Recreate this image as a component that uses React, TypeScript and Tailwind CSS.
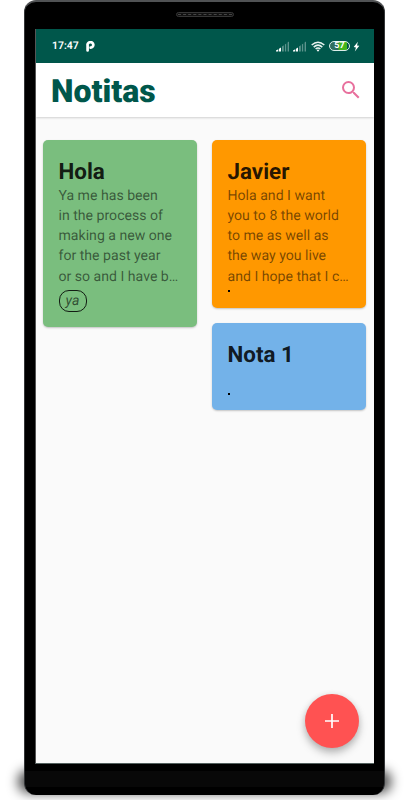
import React from "react";

function Signal() {
  return (
    <svg width="14" height="11" viewBox="0 0 14 11" className="block">
      <path d="M0 10.5V9.4L2.3 8.2V10.5Z M3 10.5V7.8L5 6.4V10.5Z" fill="#fff" />
      <path d="M6 10.5V5.5L7.8 4.2V10.5Z M8.9 10.5V3.4L10.2 2.4V10.5Z M11.6 10.5V1.4L13 .4V10.5Z" fill="#fff" opacity=".36" />
    </svg>
  );
}

function Wifi() {
  return (
    <svg width="14" height="11" viewBox="0 0 14 11" className="block" fill="none" stroke="#e8f3f0" strokeWidth="1.5">
      <path d="M.7 4Q7 -1.6 13.3 4" />
      <path d="M2.7 6.1Q7 2.2 11.3 6.1" />
      <path d="M4.6 8Q7 6 9.4 8" />
      <path d="M5.6 9.1Q7 8 8.4 9.1L7 10.7Z" fill="#fff" stroke="none" />
    </svg>
  );
}

function StatusBar() {
  return (
    <div className="flex h-[34px] items-center bg-[#00574b] pl-[16px] pr-[14px] text-white">
      <span className="w-[28px] whitespace-nowrap text-[10.5px] font-semibold leading-none">17:47</span>
      <svg width="9" height="11" viewBox="0 0 9 11" className="ml-[5.5px]">
        <path d="M1.6 9.4V4.6A2.9 2.8 0 1 1 4.6 6.7" fill="none" stroke="#fff" strokeWidth="2.7" strokeLinecap="round" />
      </svg>
      <div className="ml-auto flex items-center">
        <Signal />
        <div className="ml-[3px]"><Signal /></div>
        <div className="ml-[4px]"><Wifi /></div>
        <div className="ml-[4px] flex h-[10px] w-[21px] items-center justify-center rounded-full border border-[#dceee9] bg-[linear-gradient(90deg,#2f6f5f_0,#2f6f5f_40%,#43b51b_50%,#43b51b_88%,#00574b_88%)]">
          <span className="text-[9px] font-bold leading-none">57</span>
        </div>
        <svg width="7" height="11" viewBox="0 0 7 11" className="ml-[3px]">
          <path d="M4.9 .8L.7 6.1L3 6.4L1.8 10.4L6.3 4.8L4 4.5Z" fill="#fff" />
        </svg>
      </div>
    </div>
  );
}

function Header() {
  return (
    <header className="z-10 flex h-[54px] items-center justify-between bg-white pl-[15px] pr-[11px] shadow-[0_1px_2px_rgba(0,0,0,0.17)]">
      <h1 className="pt-[2px] text-[32px] font-black leading-none text-[#00574b]">Notitas</h1>
      <svg width="24" height="24" viewBox="0 0 24 24" fill="#e8709d">
        <path d="M15.5 14h-.79l-.28-.27A6.471 6.471 0 0 0 16 9.5 6.5 6.5 0 1 0 9.5 16c1.61 0 3.09-.59 4.23-1.57l.27.28v.79l5 4.99L20.49 19l-4.99-5zm-6 0C7.01 14 5 11.99 5 9.5S7.01 5 9.5 5 14 7.01 14 9.5 11.99 14 9.5 14z" />
      </svg>
    </header>
  );
}

interface NoteProps {
  title: string;
  lines?: string[];
  tag?: string;
  look: string;
}

function Note({ title, lines = [], tag, look }: NoteProps) {
  return (
    <article className={`rounded-[5px] px-[15.5px] pt-[19px] shadow-[0_1px_2px_rgba(0,0,0,0.22)] ${look}`}>
      <h2 className="h-[27.2px] whitespace-nowrap text-[22.4px] font-bold leading-[26px] text-black/87">{title}</h2>
      <div className="min-h-[20px] whitespace-nowrap text-[14.1px] leading-[20.2px] text-black/54">
        {lines.map((line) => <p key={line}>{line}</p>)}
      </div>
      {tag ? (
        <span className="mt-[3.5px] flex h-[22px] w-[28px] items-center justify-center rounded-[10px] border-[1.4px] border-black/85 text-[14.1px] italic leading-none text-black/60">{tag}</span>
      ) : (
        <div className="mt-[3.5px] size-[2px] bg-black" />
      )}
    </article>
  );
}

export default function App() {
  return (
    <div className="relative h-[800px] w-[409px] overflow-hidden bg-white pl-[24px] font-['Roboto','Liberation_Sans',sans-serif] [text-rendering:geometricPrecision]">
      <div className="absolute left-[18px] top-[770px] h-[23px] w-[373px] rounded-[10px] bg-black/70 blur-[6px]" />
      <div className="relative h-[795px] w-[361px] rounded-[12px] border border-[#343638] border-t-2 border-b-0 border-t-[#505254] bg-[linear-gradient(#000_0,#000_97%,#080808_97%,#080808_99%,#000_99%)] pl-[10px]">
        <div className="flex h-[27px] justify-center pr-[10px] pt-[10px]">
          <div className="flex h-[5px] w-[58px] items-center justify-center rounded-full border border-[#363636] bg-[#111]">
            <div className="w-[54px] border-t border-dashed border-[#454545]" />
          </div>
        </div>
        <main className="relative flex h-[735px] w-[339px] flex-col overflow-hidden border-l border-b border-x-[#555] border-b-[#53605e] bg-[#fafafa]">
          <StatusBar />
          <Header />
          <div className="flex gap-[15.5px] pl-[7px] pt-[22.5px]">
            <div className="w-[153.5px]">
              <Note
                title="Hola"
                lines={["Ya me has been", "in the process of", "making a new one", "for the past year", "or so and I have b…"]}
                tag="ya"
                look="h-[187px] bg-[#7abe7e]"
              />
            </div>
            <div className="flex w-[153.5px] flex-col gap-[15.5px]">
              <Note
                title="Javier"
                lines={["Hola and I want", "you to 8 the world", "to me as well as", "the way you live", "and I hope that I c…"]}
                look="h-[168px] bg-[#ff9800]"
              />
              <Note title="Nota 1" look="h-[87px] bg-[#73b2e9]" />
            </div>
          </div>
          <button aria-label="Agregar nota" className="absolute bottom-[15px] right-[15.5px] flex size-[54px] items-center justify-center rounded-full bg-[#ff5252] shadow-[0_5px_8px_rgba(0,0,0,0.25),0_1px_6px_rgba(0,0,0,0.1)]">
            <svg width="14" height="14" viewBox="0 0 14 14" stroke="#fff" strokeWidth="1.7">
              <path d="M7 0V14M0 7H14" />
            </svg>
          </button>
        </main>
      </div>
    </div>
  );
}
